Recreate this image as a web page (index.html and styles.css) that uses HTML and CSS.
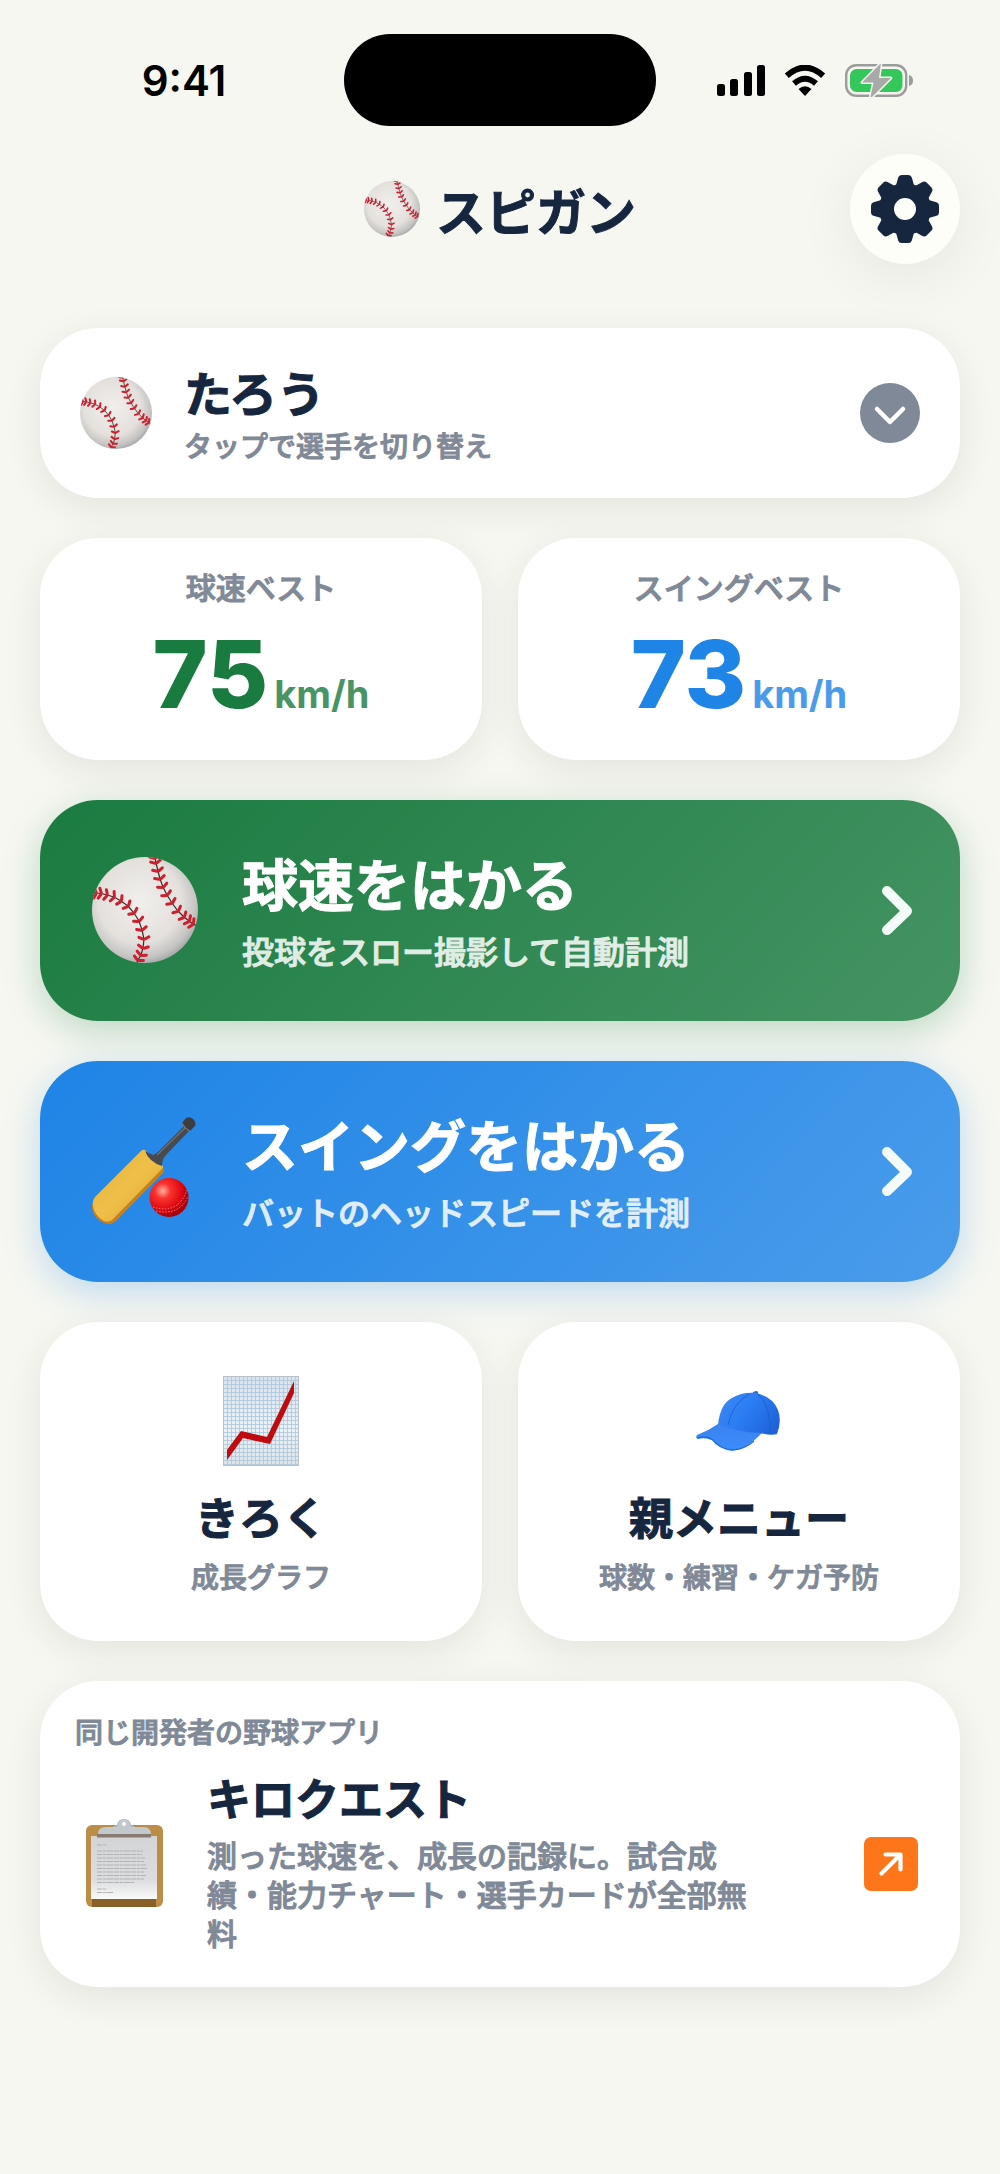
FILE: index.html
```
<!DOCTYPE html>
<html lang="ja">
<head>
  <meta charset="utf-8">
  <meta name="viewport" content="width=device-width, initial-scale=1">
  <title>スピガン</title>
  <link rel="stylesheet" href="styles.css">
</head>
<body>
  <!-- shared icons -->
  <svg class="defs" width="0" height="0" aria-hidden="true">
    <defs>
      <radialGradient id="ballFill" cx="45%" cy="42%" r="60%">
        <stop offset="0" stop-color="#f1efec"/>
        <stop offset="0.65" stop-color="#e4e1dd"/>
        <stop offset="0.88" stop-color="#c6c5c3"/>
        <stop offset="1" stop-color="#a3a6a7"/>
      </radialGradient>
      <clipPath id="ballClip"><circle cx="53" cy="53" r="53"/></clipPath>
      <marker id="stitch" markerUnits="userSpaceOnUse" markerWidth="16" markerHeight="16" viewBox="-8 -8 16 16" orient="auto">
        <path d="M-2-5 0-1M-2 5 0 1" fill="none" stroke="#cf1f2e" stroke-width="3" stroke-linecap="round"/>
      </marker>
      <symbol id="ball" viewBox="0 0 106 106">
        <circle cx="53" cy="53" r="53" fill="url(#ballFill)"/>
        <g clip-path="url(#ballClip)" fill="none" stroke="#3b2a28" stroke-width="1.200" marker-mid="url(#stitch)">
          <path d="M0 36 4 36 9 36.500 15 38 22 40 29 44 36 49 42 56 47 64 50 73 52 82 51 91 49 98 46 103 44 108"/>
          <path d="M62-3 63 1 64 6 66 14 68 22 71 30 75 38 80 46 86 54 92 60 97 64 101 67 107 70"/>
        </g>
      </symbol>
    </defs>
  </svg>

  <div class="status-bar">
    <span class="time">9:41</span>
    <span class="island"></span>
    <div class="status-icons">
      <svg width="48" height="31" viewBox="0 0 48 31">
        <rect y="19" width="8" height="12" rx="2.500"/>
        <rect x="13" y="14" width="8" height="17" rx="2.500"/>
        <rect x="27" y="7" width="8" height="24" rx="2.500"/>
        <rect x="40" width="8" height="31" rx="2.500"/>
      </svg>
      <svg width="42" height="31" viewBox="0 0 42 31">
        <path d="M21 31 14.500 24Q21 18.500 27.500 24Z"/>
        <path d="M10 18.500Q21 9 32 18.500M2.800 10.800Q21-5.500 39.200 10.800" fill="none" stroke="#000" stroke-width="6"/>
      </svg>
      <svg width="68" height="33" viewBox="0 0 68 33">
        <rect x="1.200" y="1.200" width="60" height="30.600" rx="10" fill="none" stroke="#9b9d9a" stroke-width="2.400"/>
        <path d="M64 11q4 1 4 5.500t-4 5.500z" fill="#9b9d9a"/>
        <rect x="5" y="5" width="52.500" height="23" rx="6.500" fill="#34c759"/>
        <path d="M36-1 17 18.500h11.500L25 35 46 14H34z" fill="#a8aaa7" stroke="#f6f7f1" stroke-width="3" stroke-linejoin="round" paint-order="stroke"/>
      </svg>
    </div>
  </div>

  <main class="screen">
    <header class="header">
      <h1 class="app-title">
        <svg class="ball-small"><use href="#ball"/></svg>
        スピガン
      </h1>
      <button class="settings" aria-label="設定">
        <svg width="70" height="70" viewBox="-35 -35 70 70" fill="#17263f">
          <defs>
            <path id="tooth" d="M-9.500-22-6.800-31.500Q-6-34-3.500-34h7Q6-34 6.800-31.500L9.500-22z"/>
          </defs>
          <circle r="18.500" fill="none" stroke="#17263f" stroke-width="15"/>
          <use href="#tooth"/>
          <use href="#tooth" transform="rotate(45)"/>
          <use href="#tooth" transform="rotate(90)"/>
          <use href="#tooth" transform="rotate(135)"/>
          <use href="#tooth" transform="rotate(180)"/>
          <use href="#tooth" transform="rotate(225)"/>
          <use href="#tooth" transform="rotate(270)"/>
          <use href="#tooth" transform="rotate(315)"/>
        </svg>
      </button>
    </header>

    <button class="card player">
      <svg class="ball-medium"><use href="#ball"/></svg>
      <span class="text">
        <span class="name">たろう</span>
        <span class="note">タップで選手を切り替え</span>
      </span>
      <svg width="60" height="60" viewBox="0 0 60 60">
        <circle cx="30" cy="30" r="30" fill="#808997"/>
        <path d="M17 26 30 39 43 26" fill="none" stroke="#fff" stroke-width="4.500" stroke-linecap="round" stroke-linejoin="round"/>
      </svg>
    </button>

    <div class="pair">
      <section class="card stat green">
        <h2 class="stat-label">球速ベスト</h2>
        <p class="stat-value">75<span class="unit">km/h</span></p>
      </section>
      <section class="card stat blue">
        <h2 class="stat-label">スイングベスト</h2>
        <p class="stat-value">73<span class="unit">km/h</span></p>
      </section>
    </div>

    <button class="card action action-pitch">
      <svg class="ball-large"><use href="#ball"/></svg>
      <span class="text">
        <span class="action-title">球速をはかる</span>
        <span class="action-note">投球をスロー撮影して自動計測</span>
      </span>
      <svg class="chevron" width="32" height="52" viewBox="0 0 32 52"><path d="M5 7 25 27 5 46"/></svg>
    </button>

    <button class="card action action-swing">
      <svg width="106" height="108" viewBox="0 0 106 108">
        <defs>
          <linearGradient id="wood" x1="0" y1="0" x2="1" y2="1">
            <stop offset="0" stop-color="#e3b039"/>
            <stop offset="0.5" stop-color="#efc049"/>
            <stop offset="1" stop-color="#dda22d"/>
          </linearGradient>
          <radialGradient id="redBall" cx="34%" cy="33%" r="66%">
            <stop offset="0" stop-color="#ffb0a0"/>
            <stop offset="0.3" stop-color="#f8342f"/>
            <stop offset="0.7" stop-color="#e30b14"/>
            <stop offset="1" stop-color="#a80009"/>
          </radialGradient>
        </defs>
        <path d="M4 81 52 35 71 50 72 55 24 104Q19 109 12 106 1 101 0 91 0 85 4 81Z" fill="#c8801c"/>
        <path d="M3 80 49 34Q51 32 53 33L70 48Q72 50 70 52L22 101Q18 106 12 104 2 98 1 89 0 84 3 80Z" fill="url(#wood)"/>
        <path d="M53 34 61 38Q65 36 68 33L93 8 98 13 74 38Q70 42 70 49Q57 45 53 34Z" fill="#474a4e"/>
        <path d="M65 38 94 10" stroke="#6b6e72" stroke-width="1.500"/>
        <path d="M90 6 94 1Q99-1 102 3T102 10L98 14Q93 13 90 6Z" fill="#3b3d40"/>
        <path d="M90 6Q93 12 98 14" stroke="#77797c" stroke-width="1.200" fill="none"/>
        <circle cx="77" cy="80.500" r="19.500" fill="url(#redBall)"/>
        <path d="M61 90Q86 98 95 73M64 94Q88 99 96 79" fill="none" stroke="#f79a90" stroke-width="0.800" stroke-dasharray="1.500 1.500"/>
      </svg>
      <span class="text">
        <span class="action-title">スイングをはかる</span>
        <span class="action-note">バットのヘッドスピードを計測</span>
      </span>
      <svg class="chevron" width="32" height="52" viewBox="0 0 32 52"><path d="M5 7 25 27 5 46"/></svg>
    </button>

    <div class="pair">
      <button class="card tile">
        <svg width="76" height="90" viewBox="0 0 76 90">
          <defs>
            <pattern id="grid" width="4" height="4" patternUnits="userSpaceOnUse">
              <path d="M0 .5H4M.5 0V4" stroke="#a9c7da" stroke-width="0.800"/>
            </pattern>
            <linearGradient id="sheet" x1="0" y1="0" x2="0" y2="1">
              <stop offset="0" stop-color="#dbe2ea"/>
              <stop offset="0.6" stop-color="#edf1f4"/>
              <stop offset="1" stop-color="#dfe2e5"/>
            </linearGradient>
          </defs>
          <rect width="76" height="90" fill="url(#sheet)"/>
          <rect width="76" height="90" fill="url(#grid)"/>
          <path d="M.5.500H75.500V89.500H.5Z" fill="none" stroke="#b5c2cc"/>
          <path d="M4 74 18 55 44 61 71 5V17L47 68 20 62 4 84Z" fill="#c00a0d"/>
        </svg>
        <span class="name">きろく</span>
        <span class="note">成長グラフ</span>
      </button>
      <button class="card tile">
        <svg width="86" height="90" viewBox="0 -15 86 90">
          <defs>
            <linearGradient id="crown" x1="0" y1="0" x2="1" y2="0.600">
              <stop offset="0" stop-color="#3b8bf7"/>
              <stop offset="0.5" stop-color="#2c7cf3"/>
              <stop offset="1" stop-color="#1e63da"/>
            </linearGradient>
            <linearGradient id="brim" x1="0" y1="0" x2="0" y2="1">
              <stop offset="0" stop-color="#3a83f0"/>
              <stop offset="1" stop-color="#3c8cfb"/>
            </linearGradient>
          </defs>
          <path d="M56 2.500Q57 0 60 0T62 3.500Z" fill="#2b6fe0"/>
          <path d="M22 34Q24 13 36 7 46 1 59 2 76 5 82 19 86 30 81 43 76 45 64 42L44 50Z" fill="url(#crown)"/>
          <path d="M32 34Q36 13 53 3M62 3Q75 15 74 43" fill="none" stroke="#1d5fcb" stroke-width="0.900"/>
          <path d="M22 33Q12 40 1 44-1 47 2 48 9 46 16 49 22 58 36 60 51 58 66 42 45 42 22 33Z" fill="url(#brim)"/>
          <path d="M1 47Q10 44 17 49 24 58 37 59 49 58 58 50" fill="none" stroke="#2465d2" stroke-width="1.200"/>
        </svg>
        <span class="name">親メニュー</span>
        <span class="note">球数・練習・ケガ予防</span>
      </button>
    </div>

    <a class="card promo" href="#">
      <span class="note">同じ開発者の野球アプリ</span>
      <span class="promo-row">
        <span class="promo-icon">
          <svg width="78" height="90" viewBox="0 0 78 90">
            <defs>
              <linearGradient id="paper" x1="0" y1="0" x2="0" y2="1">
                <stop offset="0" stop-color="#d3d4d6"/>
                <stop offset="0.7" stop-color="#dcdddf"/>
                <stop offset="1" stop-color="#fafafa"/>
              </linearGradient>
            </defs>
            <rect y="6" width="77" height="82" rx="6" fill="#bb8d47"/>
            <path d="M6 80H70V88H6Z" fill="#8a6029"/>
            <rect x="5" y="17" width="66" height="63" fill="url(#paper)"/>
            <path d="M11 15H65V18.500H11Z" fill="#877a72"/>
            <path d="M24 9 31 6Q32 0 38 0T45 6L52 9Z" fill="#a9b8c6"/>
            <path d="M12 15Q12 8 20 8H30Q32 7 33 4 34 0 38 0T43 4Q44 7 46 8H57Q65 8 65 15Z" fill="#c3c8cc"/>
            <circle cx="38" cy="5" r="2" fill="#fff"/>
            <path d="M11 26H21M11 32H57M11 35.500H56M11 39H59M11 42.500H58M11 46H60M11 49.500H61M11 53H58M11 56.500H60M11 60H58M11 63.500H48M11 70H21M11 73.500H27" stroke="#b0b2b4" stroke-width="1.100" stroke-dasharray="5 .7 3 .7 7 .7"/>
          </svg>
        </span>
        <span class="promo-text">
          <span class="name">キロクエスト</span>
          <span class="promo-body">測った球速を、成長の記録に。試合成績・能力チャート・選手カードが全部無料</span>
        </span>
        <svg width="54" height="54" viewBox="0 0 54 54">
          <rect width="54" height="54" rx="7" fill="#ff7519"/>
          <path d="M17.500 36.500 36 18M21.500 17.500H36.500V32.500" fill="none" stroke="#fff" stroke-width="4.200" stroke-linecap="round" stroke-linejoin="round"/>
        </svg>
      </span>
    </a>
  </main>
</body>
</html>
```
FILE: styles.css
```
* {
  box-sizing: border-box;
}
body {
  margin: 0;
  background-color: #f6f7f1;
  color: #17263f;
  font-family: "Noto Sans CJK JP", sans-serif;
}
button {
  border: none;
  font-family: inherit;
  color: inherit;
  cursor: pointer;
}
svg {
  display: block;
  flex-shrink: 0;
}
.defs {
  position: absolute;
}

/* status bar */
.status-bar {
  display: grid;
  grid-template-columns: 1fr 312px 1fr;
  align-items: center;
  padding-top: 34px;
}
.time {
  padding-left: 24px;
  text-align: center;
  font-family: Inter, sans-serif;
  font-size: 42px;
  font-weight: 600;
  color: #000;
}
.island {
  height: 92px;
  border-radius: 46px;
  background-color: #000;
}
.status-icons {
  display: flex;
  align-items: center;
  gap: 19px;
  padding-left: 61px;
}

.screen {
  display: flex;
  flex-direction: column;
  gap: 40px;
  padding: 28px 40px 40px;
}
.header {
  display: grid;
  grid-template-columns: 1fr auto 1fr;
  align-items: center;
  margin-bottom: 24px;
}
.app-title {
  grid-column: 2;
  display: flex;
  align-items: center;
  gap: 16px;
  margin: 0;
  font-size: 50px;
  line-height: 60px;
  -webkit-text-stroke: 1px;
}
.settings {
  justify-self: end;
  display: flex;
  align-items: center;
  justify-content: center;
  width: 110px;
  height: 110px;
  padding: 0;
  border-radius: 50%;
  background-color: #fdfef8;
  box-shadow: 0 12px 60px rgba(0, 0, 0, 0.07);
}
.ball-small {
  width: 56px;
  height: 56px;
}
.ball-medium {
  width: 72px;
  height: 72px;
}
.ball-large {
  width: 106px;
  height: 106px;
}

/* cards */
.card {
  border-radius: 58px;
  background-color: #fff;
  box-shadow: 0 10px 36px rgba(20, 40, 20, 0.09);
}
.pair {
  display: grid;
  grid-template-columns: 1fr 1fr;
  gap: 36px;
}
.text {
  flex: 1;
  display: flex;
  flex-direction: column;
  gap: 4px;
  text-align: left;
}
.name {
  font-size: 44px;
  font-weight: 700;
  line-height: 60px;
  -webkit-text-stroke: 1px;
}
.note {
  font-size: 28px;
  font-weight: 500;
  line-height: 40px;
  color: #808997;
  -webkit-text-stroke: 1px;
}
.player {
  display: flex;
  align-items: center;
  gap: 32px;
  padding: 33px 40px;
}
.player .name {
  font-size: 48px;
}

/* best values */
.stat {
  padding: 28px 20px 36px;
  text-align: center;
}
.stat-label {
  margin: 0 0 18px;
  font-size: 30px;
  font-weight: 500;
  line-height: 40px;
  color: #808997;
  -webkit-text-stroke: 1px;
}
.stat-value {
  margin: 0;
  font-family: Inter, sans-serif;
  font-size: 94px;
  font-weight: 800;
  line-height: 100px;
}
.unit {
  margin-left: 6px;
  font-size: 38px;
  font-weight: 700;
  line-height: 38px;
  opacity: 0.8;
}
.green {
  color: #1a7b40;
}
.blue {
  color: #1e84e6;
}

/* measure buttons */
.action {
  display: flex;
  align-items: center;
  gap: 44px;
  padding: 48px 46px 49px 52px;
  color: #fff;
}
.action .text {
  gap: 12px;
}
.action-pitch {
  background: linear-gradient(135deg, #1a7b40, #459463);
  box-shadow: 0 10px 36px rgba(26, 123, 64, 0.26);
}
.action-swing {
  background: linear-gradient(135deg, #1e84e6, #4a9ceb);
  box-shadow: 0 10px 36px rgba(30, 132, 230, 0.26);
}
.action-title {
  font-size: 56px;
  font-weight: 700;
  line-height: 68px;
  -webkit-text-stroke: 1px;
}
.action-note {
  font-size: 32px;
  font-weight: 500;
  line-height: 44px;
  opacity: 0.85;
  -webkit-text-stroke: 1px;
}
.chevron {
  fill: none;
  stroke: #f3faf7;
  stroke-width: 10;
  stroke-linecap: round;
  stroke-linejoin: round;
}

/* menu tiles */
.tile {
  display: flex;
  flex-direction: column;
  align-items: center;
  padding: 54px 20px 45px;
}
.tile .name {
  margin: 20px 0 10px;
}

/* other app */
.promo {
  display: flex;
  flex-direction: column;
  gap: 16px;
  padding: 30px 42px 27px 35px;
  color: inherit;
  text-decoration: none;
}
.promo-row {
  display: flex;
  align-items: center;
}
.promo-icon {
  display: flex;
  justify-content: center;
  width: 100px;
  margin-right: 32px;
}
.promo-text {
  flex: 1;
  display: flex;
  flex-direction: column;
  gap: 8px;
  padding: 0 100px 8px 0;
}
.promo-body {
  font-size: 30px;
  font-weight: 500;
  line-height: 39px;
  color: #808997;
  -webkit-text-stroke: 1px;
}
```
